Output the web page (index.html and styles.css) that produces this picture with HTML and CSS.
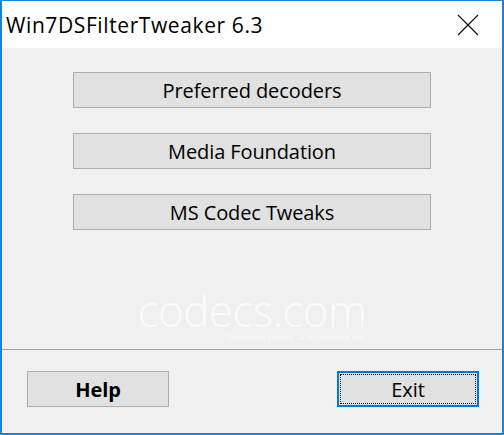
FILE: index.html
```html
<!DOCTYPE html>
<html>
<head>
<meta charset="utf-8">
<link rel="stylesheet" href="styles.css">
</head>
<body>
<div class="window">
  <div class="titlebar">
    <span class="title">Win7DSFilterTweaker 6.3</span>
    <span class="close">
      <svg width="22" height="22" viewBox="0 0 22 22"><path d="M1 1L21 21M21 1L1 21" stroke="#111" stroke-width="1.2" fill="none"/></svg>
    </span>
  </div>
  <div class="client">
    <div class="actions">
      <button class="btn wide">Preferred decoders</button>
      <button class="btn wide">Media Foundation</button>
      <button class="btn wide">MS Codec Tweaks</button>
    </div>
    <div class="watermark">
      <div class="wm-logo">codecs.com</div>
      <div class="wm-tag">Download codecs - A multimedia tool</div>
    </div>
    <div class="separator"></div>
    <div class="footer">
      <button class="btn small bold">Help</button>
      <button class="btn small focused"><span class="focus-ring">Exit</span></button>
    </div>
  </div>
</div>
</body>
</html>
```
FILE: styles.css
```css
html, body {
  margin: 0;
  padding: 0;
  background: #ffffff;
}
.window {
  width: 504px;
  height: 435px;
  box-sizing: border-box;
  border: 2px solid #1883d7;
  border-top-width: 1px;
  display: flex;
  flex-direction: column;
  font-family: "Open Sans", "Noto Sans", sans-serif;
  color: #000;
}
.titlebar {
  height: 47px;
  background: #fff;
  display: flex;
  align-items: center;
  justify-content: space-between;
  padding-left: 4px;
  padding-right: 23px;
  flex: none;
}
.title {
  font-size: 21px;
  letter-spacing: 0.6px;
  line-height: 1;
  padding-top: 2px;
}
.close {
  display: flex;
  width: 22px;
  height: 22px;
}
.client {
  flex: 1;
  background: #f0f0f0;
  display: flex;
  flex-direction: column;
}
.actions {
  display: flex;
  flex-direction: column;
  padding-top: 24px;
  padding-left: 71px;
  gap: 25px;
}
.btn {
  box-sizing: border-box;
  height: 36px;
  border: 1px solid #adadad;
  background: #e1e1e1;
  font-family: "Open Sans", "Noto Sans", sans-serif;
  font-size: 20px;
  color: #000;
  padding: 0;
  margin: 0;
  display: flex;
  align-items: center;
  justify-content: center;
  letter-spacing: -0.1px;
}
.wide {
  width: 358px;
}
.watermark {
  height: 119px;
  display: flex;
  flex-direction: column;
  align-items: center;
  padding-right: 0;
  padding-top: 58px;
  box-sizing: border-box;
  color: #fbfbfb;
}
.wm-logo {
  font-size: 44px;
  font-weight: 300;
  line-height: 44px;
  letter-spacing: -0.6px;
}
.wm-tag {
  font-size: 8px;
  line-height: 9px;
  align-self: flex-end;
  margin-right: 136px;
  margin-top: 0;
}
.separator {
  height: 1px;
  background: #a0a0a0;
  flex: none;
}
.footer {
  display: flex;
  justify-content: space-between;
  padding: 21px 23px 0 25px;
}
.small {
  width: 142px;
}
.bold {
  font-weight: 700;
}
.focused {
  border: 2px solid #0078d7;
  padding: 1px;
}
.focus-ring {
  box-sizing: border-box;
  width: 100%;
  height: 100%;
  border: 1px dotted #000;
  display: flex;
  align-items: center;
  justify-content: center;
}
```
